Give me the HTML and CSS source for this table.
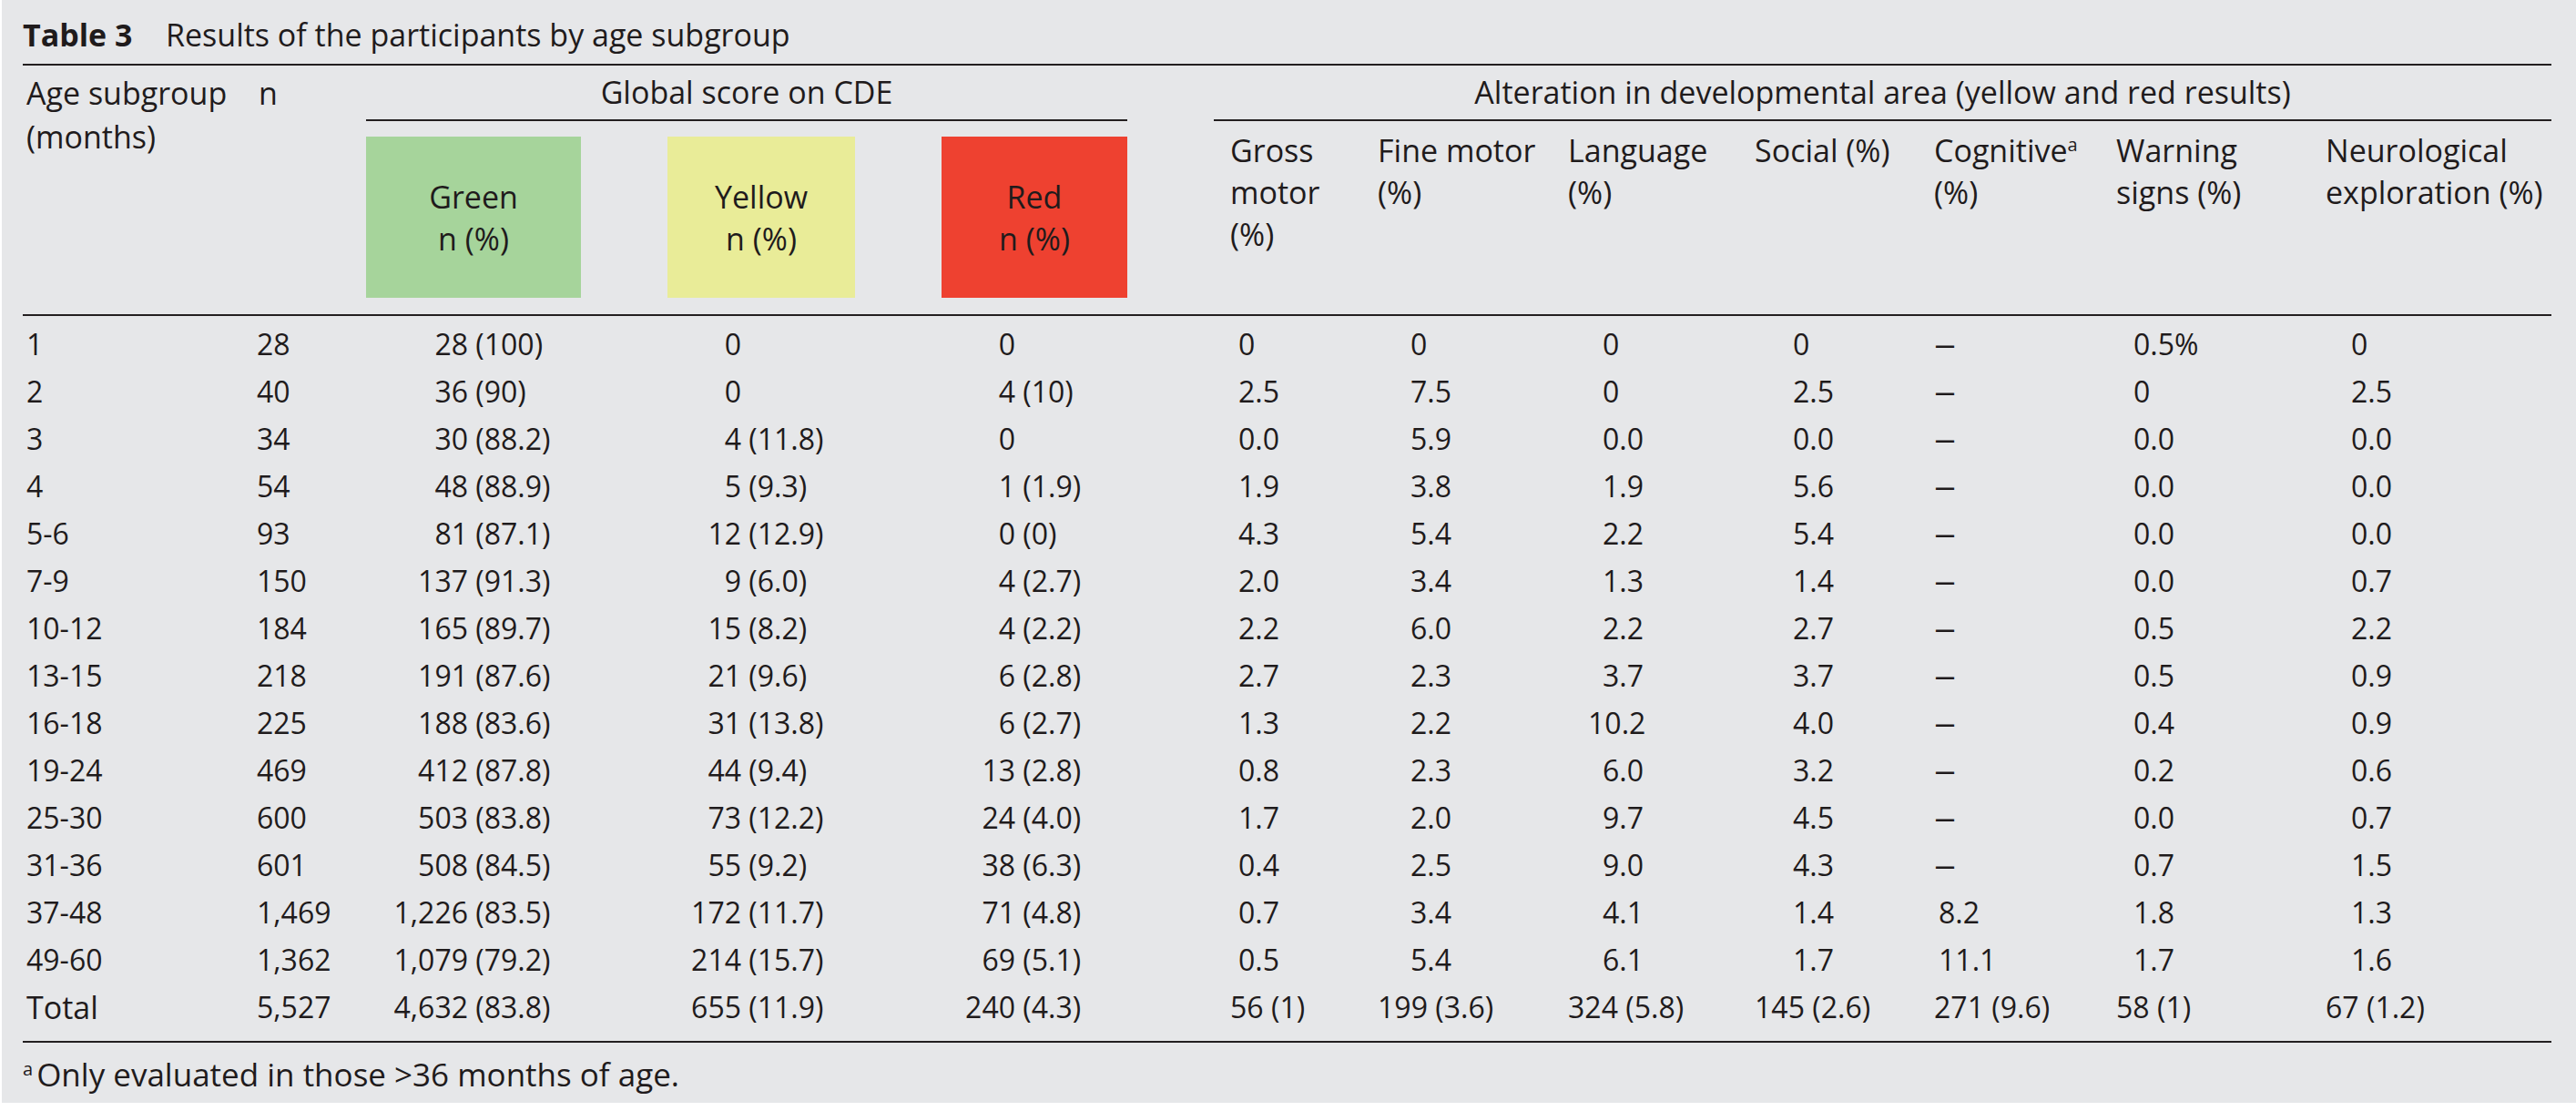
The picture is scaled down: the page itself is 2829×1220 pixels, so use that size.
FILE: index.html
```html
<!DOCTYPE html>
<html lang="en">
<head>
<meta charset="utf-8">
<title>Table 3 – Results of the participants by age subgroup</title>
<link rel="stylesheet" href="styles.css">
</head>
<body>
<div class="page">
  <div class="title"><b class="label">Table 3</b><span class="caption">Results of the participants by age subgroup</span></div>
  <table class="results">
    <colgroup>
      <col class="c-age"><col class="c-n"><col class="c-green"><col class="c-yellow"><col class="c-red">
      <col class="c-gross"><col class="c-fine"><col class="c-lang"><col class="c-social"><col class="c-cog"><col class="c-warn"><col class="c-neuro">
    </colgroup>
    <thead>
      <tr class="hrow1">
        <th rowspan="2" class="top age">Age subgroup<br>(months)</th>
        <th rowspan="2" class="top n">n</th>
        <th colspan="3" class="group"><div class="group-label">Global score on CDE</div></th>
        <th colspan="7" class="group"><div class="group-label alt">Alteration in developmental area (yellow and red results)</div></th>
      </tr>
      <tr class="hrow2">
        <th class="sw"><div class="swatch green">Green<br>n (%)</div></th>
        <th class="sw"><div class="swatch yellow">Yellow<br>n (%)</div></th>
        <th class="sw"><div class="swatch red">Red<br>n (%)</div></th>
        <th class="area gross">Gross<br>motor<br>(%)</th>
        <th class="area">Fine motor<br>(%)</th>
        <th class="area">Language<br>(%)</th>
        <th class="area">Social (%)</th>
        <th class="area">Cognitive<sup>a</sup><br>(%)</th>
        <th class="area">Warning<br>signs (%)</th>
        <th class="area">Neurological<br>exploration (%)</th>
      </tr>
    </thead>
    <tbody>
      <tr><td class="age">1</td><td class="n">28</td><td class="g"><span class="int">28</span> (100)</td><td class="y"><span class="int">0</span></td><td class="r"><span class="int">0</span></td><td class="gm">0</td><td class="fm">0</td><td class="la">0</td><td class="so">0</td><td class="co"><span class="dash">–</span></td><td class="wa">0.5%</td><td class="ne">0</td></tr>
      <tr><td class="age">2</td><td class="n">40</td><td class="g"><span class="int">36</span> (90)</td><td class="y"><span class="int">0</span></td><td class="r"><span class="int">4</span> (10)</td><td class="gm">2.5</td><td class="fm">7.5</td><td class="la">0</td><td class="so">2.5</td><td class="co"><span class="dash">–</span></td><td class="wa">0</td><td class="ne">2.5</td></tr>
      <tr><td class="age">3</td><td class="n">34</td><td class="g"><span class="int">30</span> (88.2)</td><td class="y"><span class="int">4</span> (11.8)</td><td class="r"><span class="int">0</span></td><td class="gm">0.0</td><td class="fm">5.9</td><td class="la">0.0</td><td class="so">0.0</td><td class="co"><span class="dash">–</span></td><td class="wa">0.0</td><td class="ne">0.0</td></tr>
      <tr><td class="age">4</td><td class="n">54</td><td class="g"><span class="int">48</span> (88.9)</td><td class="y"><span class="int">5</span> (9.3)</td><td class="r"><span class="int">1</span> (1.9)</td><td class="gm">1.9</td><td class="fm">3.8</td><td class="la">1.9</td><td class="so">5.6</td><td class="co"><span class="dash">–</span></td><td class="wa">0.0</td><td class="ne">0.0</td></tr>
      <tr><td class="age">5-6</td><td class="n">93</td><td class="g"><span class="int">81</span> (87.1)</td><td class="y"><span class="int">12</span> (12.9)</td><td class="r"><span class="int">0</span> (0)</td><td class="gm">4.3</td><td class="fm">5.4</td><td class="la">2.2</td><td class="so">5.4</td><td class="co"><span class="dash">–</span></td><td class="wa">0.0</td><td class="ne">0.0</td></tr>
      <tr><td class="age">7-9</td><td class="n">150</td><td class="g"><span class="int">137</span> (91.3)</td><td class="y"><span class="int">9</span> (6.0)</td><td class="r"><span class="int">4</span> (2.7)</td><td class="gm">2.0</td><td class="fm">3.4</td><td class="la">1.3</td><td class="so">1.4</td><td class="co"><span class="dash">–</span></td><td class="wa">0.0</td><td class="ne">0.7</td></tr>
      <tr><td class="age">10-12</td><td class="n">184</td><td class="g"><span class="int">165</span> (89.7)</td><td class="y"><span class="int">15</span> (8.2)</td><td class="r"><span class="int">4</span> (2.2)</td><td class="gm">2.2</td><td class="fm">6.0</td><td class="la">2.2</td><td class="so">2.7</td><td class="co"><span class="dash">–</span></td><td class="wa">0.5</td><td class="ne">2.2</td></tr>
      <tr><td class="age">13-15</td><td class="n">218</td><td class="g"><span class="int">191</span> (87.6)</td><td class="y"><span class="int">21</span> (9.6)</td><td class="r"><span class="int">6</span> (2.8)</td><td class="gm">2.7</td><td class="fm">2.3</td><td class="la">3.7</td><td class="so">3.7</td><td class="co"><span class="dash">–</span></td><td class="wa">0.5</td><td class="ne">0.9</td></tr>
      <tr><td class="age">16-18</td><td class="n">225</td><td class="g"><span class="int">188</span> (83.6)</td><td class="y"><span class="int">31</span> (13.8)</td><td class="r"><span class="int">6</span> (2.7)</td><td class="gm">1.3</td><td class="fm">2.2</td><td class="la wide">10.2</td><td class="so">4.0</td><td class="co"><span class="dash">–</span></td><td class="wa">0.4</td><td class="ne">0.9</td></tr>
      <tr><td class="age">19-24</td><td class="n">469</td><td class="g"><span class="int">412</span> (87.8)</td><td class="y"><span class="int">44</span> (9.4)</td><td class="r"><span class="int">13</span> (2.8)</td><td class="gm">0.8</td><td class="fm">2.3</td><td class="la">6.0</td><td class="so">3.2</td><td class="co"><span class="dash">–</span></td><td class="wa">0.2</td><td class="ne">0.6</td></tr>
      <tr><td class="age">25-30</td><td class="n">600</td><td class="g"><span class="int">503</span> (83.8)</td><td class="y"><span class="int">73</span> (12.2)</td><td class="r"><span class="int">24</span> (4.0)</td><td class="gm">1.7</td><td class="fm">2.0</td><td class="la">9.7</td><td class="so">4.5</td><td class="co"><span class="dash">–</span></td><td class="wa">0.0</td><td class="ne">0.7</td></tr>
      <tr><td class="age">31-36</td><td class="n">601</td><td class="g"><span class="int">508</span> (84.5)</td><td class="y"><span class="int">55</span> (9.2)</td><td class="r"><span class="int">38</span> (6.3)</td><td class="gm">0.4</td><td class="fm">2.5</td><td class="la">9.0</td><td class="so">4.3</td><td class="co"><span class="dash">–</span></td><td class="wa">0.7</td><td class="ne">1.5</td></tr>
      <tr><td class="age">37-48</td><td class="n">1,469</td><td class="g"><span class="int">1,226</span> (83.5)</td><td class="y"><span class="int">172</span> (11.7)</td><td class="r"><span class="int">71</span> (4.8)</td><td class="gm">0.7</td><td class="fm">3.4</td><td class="la">4.1</td><td class="so">1.4</td><td class="co val">8.2</td><td class="wa">1.8</td><td class="ne">1.3</td></tr>
      <tr><td class="age">49-60</td><td class="n">1,362</td><td class="g"><span class="int">1,079</span> (79.2)</td><td class="y"><span class="int">214</span> (15.7)</td><td class="r"><span class="int">69</span> (5.1)</td><td class="gm">0.5</td><td class="fm">5.4</td><td class="la">6.1</td><td class="so">1.7</td><td class="co val">11.1</td><td class="wa">1.7</td><td class="ne">1.6</td></tr>
      <tr class="total"><td class="age">Total</td><td class="n">5,527</td><td class="g"><span class="int">4,632</span> (83.8)</td><td class="y"><span class="int">655</span> (11.9)</td><td class="r"><span class="int">240</span> (4.3)</td><td class="gm">56 (1)</td><td class="fm">199 (3.6)</td><td class="la">324 (5.8)</td><td class="so">145 (2.6)</td><td class="co">271 (9.6)</td><td class="wa">58 (1)</td><td class="ne">67 (1.2)</td></tr>
    </tbody>
  </table>
  <div class="footnote"><sup>a</sup>Only evaluated in those &gt;36 months of age.</div>
</div>
</body>
</html>
```
FILE: styles.css
```css
* { box-sizing: border-box; }

html, body {
  margin: 0;
  padding: 0;
  background: #ffffff;
}

body {
  font-family: "Open Sans", "Liberation Sans", sans-serif;
  font-size: 32px;
  color: #1f1b1c;
}

.page {
  margin-left: 2px;
  width: 2827px;
  height: 1211px;
  background: #e6e7e9;
  padding-left: 23px;
  overflow: hidden;
}

/* Title */
.title {
  padding-top: 16px;
  padding-bottom: 10px;
  line-height: 44px;
  font-size: 34px;
  white-space: nowrap;
}
.title .label {
  display: inline-block;
  width: 157px;
  font-weight: 700;
}

/* Table */
.results {
  border-collapse: separate;
  border-spacing: 0;
  table-layout: fixed;
  width: 2777px;
}
.c-age { width: 253px; }
.c-n { width: 124px; }
.c-green { width: 331px; }
.c-yellow { width: 301px; }
.c-red { width: 204px; }
.c-gross { width: 275px; }
.c-fine { width: 209px; }
.c-lang { width: 205px; }
.c-social { width: 197px; }
.c-cog { width: 200px; }
.c-warn { width: 230px; }
.c-neuro { width: 248px; }

.results th {
  font-weight: 400;
  font-size: 34px;
  text-align: left;
  vertical-align: top;
  padding: 0;
}

.hrow1 th {
  border-top: 2px solid #231f20;
}
.hrow2 th,
.results th.top {
  border-bottom: 2px solid #231f20;
}

.results th.top {
  padding-top: 6px;
  line-height: 48px;
}
.results th.age { padding-left: 4px; }
.results th.n { padding-left: 6px; }

.group-label {
  text-align: center;
  line-height: 59px;
  border-bottom: 2px solid #231f20;
  white-space: nowrap;
}
.group-label.alt {
  margin-left: 95px;
}

.swatch {
  margin-top: 17px;
  margin-bottom: 18px;
  height: 177px;
  display: flex;
  flex-direction: column;
  justify-content: center;
  text-align: center;
  line-height: 46px;
}
.swatch.green { width: 236px; background: #a6d49b; }
.swatch.yellow { width: 206px; background: #e9ec98; }
.swatch.red { width: 204px; background: #ee4130; }

.results th.area {
  padding-top: 9px;
  line-height: 46px;
  white-space: nowrap;
}
.results th.gross { padding-left: 113px; }

sup {
  font-size: 20px;
  line-height: 0;
  vertical-align: 12px;
}

/* Body */
.results td {
  padding: 0;
  line-height: 52px;
  white-space: nowrap;
}
.results tbody tr:first-child td { padding-top: 5px; }
.results tbody tr:last-child td {
  padding-bottom: 11px;
  border-bottom: 2px solid #231f20;
}

.results td.age { padding-left: 4px; }
.results td.n { padding-left: 4px; }
.results tr.total td.age { font-size: 34px; }

.int {
  display: inline-block;
  text-align: right;
}
td.g .int { width: 112px; }
td.y .int { width: 81px; }
td.r .int { width: 81px; }

.dash {
  display: inline-block;
  transform: scaleX(1.5);
  transform-origin: left center;
}

td.gm { padding-left: 122px; }
td.fm { padding-left: 36px; }
td.la { padding-left: 38px; }
td.la.wide { padding-left: 22px; }
td.so { padding-left: 42px; }
td.co { padding-left: 0; }
td.co.val { padding-left: 5px; }
td.wa { padding-left: 19px; }
td.ne { padding-left: 28px; }

.results tr.total td.gm { padding-left: 113px; }
.results tr.total td.fm,
.results tr.total td.la,
.results tr.total td.so,
.results tr.total td.co,
.results tr.total td.wa,
.results tr.total td.ne { padding-left: 0; }

/* Footnote */
.footnote {
  margin-top: 13px;
  line-height: 44px;
  font-size: 35px;
  white-space: nowrap;
}
.footnote sup {
  margin-right: 4px;
}
```
